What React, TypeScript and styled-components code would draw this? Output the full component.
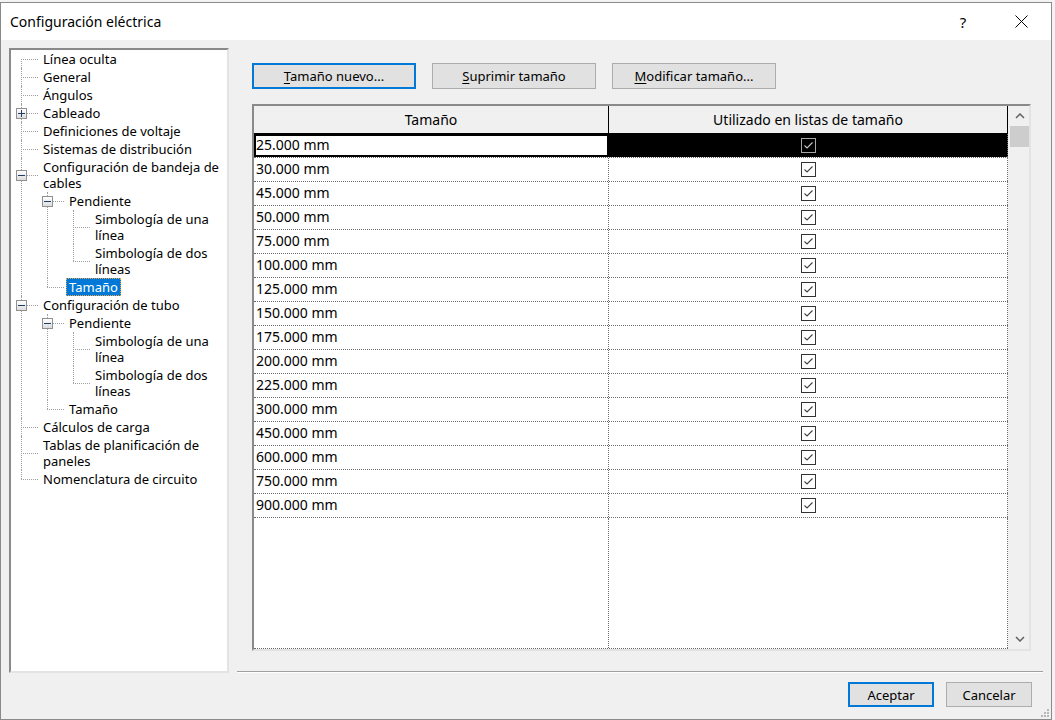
import React from 'react';
import styled, { createGlobalStyle, css } from 'styled-components';

interface TreeNode {
  lines: string[];
  children?: TreeNode[];
  collapsed?: boolean;
  selected?: boolean;
}

const pendiente = (): TreeNode => ({
  lines: ['Pendiente'],
  children: [{ lines: ['Simbología de una', 'línea'] }, { lines: ['Simbología de dos', 'líneas'] }],
});

const tree: TreeNode[] = [
  { lines: ['Línea oculta'] },
  { lines: ['General'] },
  { lines: ['Ángulos'] },
  { lines: ['Cableado'], collapsed: true },
  { lines: ['Definiciones de voltaje'] },
  { lines: ['Sistemas de distribución'] },
  {
    lines: ['Configuración de bandeja de', 'cables'],
    children: [pendiente(), { lines: ['Tamaño'], selected: true }],
  },
  { lines: ['Configuración de tubo'], children: [pendiente(), { lines: ['Tamaño'] }] },
  { lines: ['Cálculos de carga'] },
  { lines: ['Tablas de planificación de', 'paneles'] },
  { lines: ['Nomenclatura de circuito'] },
];

const sizes = [25, 30, 45, 50, 75, 100, 125, 150, 175, 200, 225, 300, 450, 600, 750, 900];

const LINE_X = 10;
const INDENT = 26;

const GlobalStyle = createGlobalStyle`
  html, body {
    margin: 0;
    padding: 0;
    background: #f3f3f3;
  }
  body {
    font-family: 'Noto Sans', 'Segoe UI', sans-serif;
    color: #000;
  }
  * {
    box-sizing: border-box;
  }
`;

const Page = styled.div`
  width: 1055px;
  height: 720px;
  overflow: hidden;
  display: flex;
  align-items: flex-start;
`;

const Window = styled.div`
  position: relative;
  width: 1052px;
  height: 718px;
  margin-top: 2px;
  border: 1px solid #8a8a8a;
  background: #f0f0f0;
  display: flex;
  flex-direction: column;
`;

const TitleBar = styled.div`
  height: 37px;
  flex-shrink: 0;
  background: #fff;
  display: flex;
  align-items: center;
  padding: 0 7px 0 9px;
`;

const Title = styled.div`
  flex: 1;
  font-size: 14px;
`;

const TitleButton = styled.div<{ $gap?: number }>`
  width: 46px;
  height: 100%;
  margin-right: ${({ $gap }) => $gap ?? 0}px;
  display: flex;
  align-items: center;
  justify-content: center;
  font-size: 15px;
`;

const Body = styled.div`
  flex: 1;
  display: flex;
  gap: 8px;
  padding: 8px 8px 0 8px;
`;

const sunken = css`
  border-style: solid;
  border-width: 2px;
  border-color: #8a8a8a #e3e3e3 #e3e3e3 #8a8a8a;
`;

const TreePanel = styled.div`
  ${sunken};
  width: 220px;
  height: 625px;
  flex-shrink: 0;
  background: #fff;
  overflow: hidden;
  font-size: 13px;
`;

const TreeList = styled.ul`
  list-style: none;
  margin: 0;
  padding: 0;
`;

interface TreeItemProps {
  $level: number;
  $last: boolean;
  $rootFirst: boolean;
  $center: number;
}

const TreeItem = styled.li<TreeItemProps>`
  position: relative;

  &::before {
    content: '';
    position: absolute;
    left: ${({ $level }) => LINE_X + INDENT * $level}px;
    top: ${({ $rootFirst, $center }) => ($rootFirst ? $center : 0)}px;
    ${({ $last, $center }) => ($last ? `height: ${$center}px;` : 'bottom: 0;')}
    border-left: 1px dotted #a0a0a0;
  }
`;

const TreeRow = styled.div<{ $level: number }>`
  position: relative;
  display: flex;
  padding-left: ${({ $level }) => 29 + INDENT * $level}px;

  &::before {
    content: '';
    position: absolute;
    left: ${({ $level }) => LINE_X + INDENT * $level}px;
    top: 50%;
    width: 17px;
    border-top: 1px dotted #a0a0a0;
  }
`;

const Expander = styled.span<{ $level: number }>`
  position: absolute;
  z-index: 1;
  left: ${({ $level }) => LINE_X + INDENT * $level - 5}px;
  top: calc(50% - 5px);
  width: 11px;
  height: 11px;
  border: 1px solid #919191;
  background: linear-gradient(#ffffff, #dcdcdc);
  display: flex;
  align-items: center;
  justify-content: center;
`;

const Label = styled.span<{ $selected?: boolean }>`
  display: inline-block;
  padding: 1px 3px;
  line-height: 16px;
  white-space: nowrap;
  ${({ $selected }) =>
    $selected &&
    css`
      background: #0078d7;
      color: #fff;
      outline: 1px dotted #e7a64b;
      outline-offset: -1px;
    `}
`;

const RightPane = styled.div`
  flex: 1;
  display: flex;
  flex-direction: column;
`;

const ButtonRow = styled.div`
  display: flex;
  gap: 16px;
  padding: 15px 0 0 15px;
`;

const Button = styled.button<{ $default?: boolean; $width: number; $height: number }>`
  width: ${({ $width }) => $width}px;
  height: ${({ $height }) => $height}px;
  padding: 0;
  font-family: inherit;
  font-size: 13px;
  color: #000;
  background: #e1e1e1;
  border: 1px solid #adadad;
  ${({ $default }) =>
    $default &&
    css`
      border: 2px solid #0078d7;
    `}

  u {
    text-decoration-thickness: 1px;
    text-underline-offset: 2px;
  }
`;

const Grid = styled.div`
  ${sunken};
  margin: 15px 12px 0 15px;
  height: 547px;
  display: flex;
`;

const TableArea = styled.div`
  width: 754px;
  display: flex;
  flex-direction: column;
`;

const columns = css`
  display: grid;
  grid-template-columns: 355px 399px;
`;

const HeaderRow = styled.div`
  ${columns};
  height: 28px;
  background: #f0f0f0;
  border-bottom: 1px solid #000;
`;

const HeaderCell = styled.div`
  display: flex;
  align-items: center;
  justify-content: center;
  font-size: 14px;
  border-right: 1px solid #000;
`;

const TableBody = styled.div`
  flex: 1;
  display: flex;
  flex-direction: column;
  background: #fff;
  border-bottom: 1px dotted #6d6d6d;
`;

const Row = styled.div`
  ${columns};
  height: 24px;
  border-bottom: 1px dotted #6d6d6d;
`;

const SizeCell = styled.div<{ $current?: boolean }>`
  padding-left: 2px;
  font-size: 14px;
  line-height: 22px;
  border-right: 1px dotted #6d6d6d;
  ${({ $current }) =>
    $current &&
    css`
      outline: 2px solid #000;
      outline-offset: -2px;
    `}
`;

const CheckCell = styled.div<{ $selected?: boolean }>`
  display: flex;
  align-items: center;
  justify-content: center;
  border-right: 1px dotted #6d6d6d;
  background: ${({ $selected }) => ($selected ? '#000' : 'transparent')};
`;

const CheckBox = styled.span<{ $selected?: boolean }>`
  width: 15px;
  height: 15px;
  display: flex;
  border: 1px solid ${({ $selected }) => ($selected ? '#a8a8a8' : '#333')};
  color: ${({ $selected }) => ($selected ? '#c8c8c8' : '#444')};
`;

const Filler = styled.div`
  ${columns};
  flex: 1;
`;

const FillerCell = styled.div`
  border-right: 1px dotted #6d6d6d;
`;

const ScrollBar = styled.div`
  width: 21px;
  display: flex;
  flex-direction: column;
  background: #f0f0f0;
  padding-left: 2px;
`;

const ScrollArrow = styled.div`
  height: 20px;
  display: flex;
  align-items: center;
  justify-content: center;
`;

const ScrollThumb = styled.div`
  height: 21px;
  background: #cdcdcd;
`;

const ScrollTrack = styled.div`
  flex: 1;
`;

const Separator = styled.div`
  margin-top: 20px;
  height: 2px;
  border-top: 1px solid #a0a0a0;
  border-bottom: 1px solid #fff;
`;

const Footer = styled.div`
  display: flex;
  justify-content: flex-end;
  gap: 12px;
  margin-top: 9px;
  padding-right: 11px;
`;

const Grip = styled.svg`
  position: absolute;
  right: 1px;
  bottom: 1px;
`;

const Chevron: React.VFC<{ down?: boolean }> = ({ down }) => (
  <svg width="10" height="6" viewBox="0 0 10 6">
    <polyline
      points={down ? '1,1 5,5 9,1' : '1,5 5,1 9,5'}
      fill="none"
      stroke="#606060"
      strokeWidth="1.5"
    />
  </svg>
);

const Tree: React.VFC<{ nodes: TreeNode[]; level: number }> = ({ nodes, level }) => (
  <TreeList>
    {nodes.map((node, i) => {
      const center = (2 + 16 * node.lines.length) / 2;
      return (
        <TreeItem
          key={node.lines.join(' ') + i}
          $level={level}
          $last={i === nodes.length - 1}
          $rootFirst={level === 0 && i === 0}
          $center={center}
        >
          <TreeRow $level={level}>
            {(node.children || node.collapsed) && (
              <Expander $level={level}>
                <svg width="7" height="7" viewBox="0 0 7 7">
                  <line x1="0" y1="3.5" x2="7" y2="3.5" stroke="#1f3b6b" strokeWidth="1" />
                  {node.collapsed && <line x1="3.5" y1="0" x2="3.5" y2="7" stroke="#1f3b6b" strokeWidth="1" />}
                </svg>
              </Expander>
            )}
            <Label $selected={node.selected}>
              {node.lines.map((line) => (
                <div key={line}>{line}</div>
              ))}
            </Label>
          </TreeRow>
          {node.children && <Tree nodes={node.children} level={level + 1} />}
        </TreeItem>
      );
    })}
  </TreeList>
);

export default function App() {
  return (
    <Page>
      <GlobalStyle />
      <Window>
        <TitleBar>
          <Title>Configuración eléctrica</Title>
          <TitleButton $gap={12}>?</TitleButton>
          <TitleButton>
            <svg width="13" height="13" viewBox="0 0 13 13">
              <path d="M0.5 0.5 L12.5 12.5 M12.5 0.5 L0.5 12.5" stroke="#000" strokeWidth="1" />
            </svg>
          </TitleButton>
        </TitleBar>
        <Body>
          <TreePanel>
            <Tree nodes={tree} level={0} />
          </TreePanel>
          <RightPane>
            <ButtonRow>
              <Button $default $width={164} $height={26}>
                <u>T</u>amaño nuevo...
              </Button>
              <Button $width={164} $height={26}>
                <u>S</u>uprimir tamaño
              </Button>
              <Button $width={164} $height={26}>
                <u>M</u>odificar tamaño...
              </Button>
            </ButtonRow>
            <Grid>
              <TableArea>
                <HeaderRow>
                  <HeaderCell>Tamaño</HeaderCell>
                  <HeaderCell>Utilizado en listas de tamaño</HeaderCell>
                </HeaderRow>
                <TableBody>
                  {sizes.map((size, i) => (
                    <Row key={size}>
                      <SizeCell $current={i === 0}>{size}.000 mm</SizeCell>
                      <CheckCell $selected={i === 0}>
                        <CheckBox $selected={i === 0}>
                          <svg width="13" height="13" viewBox="0 0 13 13">
                            <polyline points="2.5,6.5 5,9 10.5,3.5" fill="none" stroke="currentColor" strokeWidth="1.1" />
                          </svg>
                        </CheckBox>
                      </CheckCell>
                    </Row>
                  ))}
                  <Filler>
                    <FillerCell />
                    <FillerCell />
                  </Filler>
                </TableBody>
              </TableArea>
              <ScrollBar>
                <ScrollArrow>
                  <Chevron />
                </ScrollArrow>
                <ScrollThumb />
                <ScrollTrack />
                <ScrollArrow>
                  <Chevron down />
                </ScrollArrow>
              </ScrollBar>
            </Grid>
            <Separator />
            <Footer>
              <Button $default $width={86} $height={25}>
                Aceptar
              </Button>
              <Button $width={86} $height={25}>
                Cancelar
              </Button>
            </Footer>
          </RightPane>
        </Body>
        <Grip width="9" height="9" viewBox="0 0 9 9">
          {[
            [6, 0],
            [3, 3],
            [6, 3],
            [0, 6],
            [3, 6],
            [6, 6],
          ].map(([x, y]) => (
            <rect key={`${x}-${y}`} x={x} y={y} width="2" height="2" fill="#b8b8b8" />
          ))}
        </Grip>
      </Window>
    </Page>
  );
}
